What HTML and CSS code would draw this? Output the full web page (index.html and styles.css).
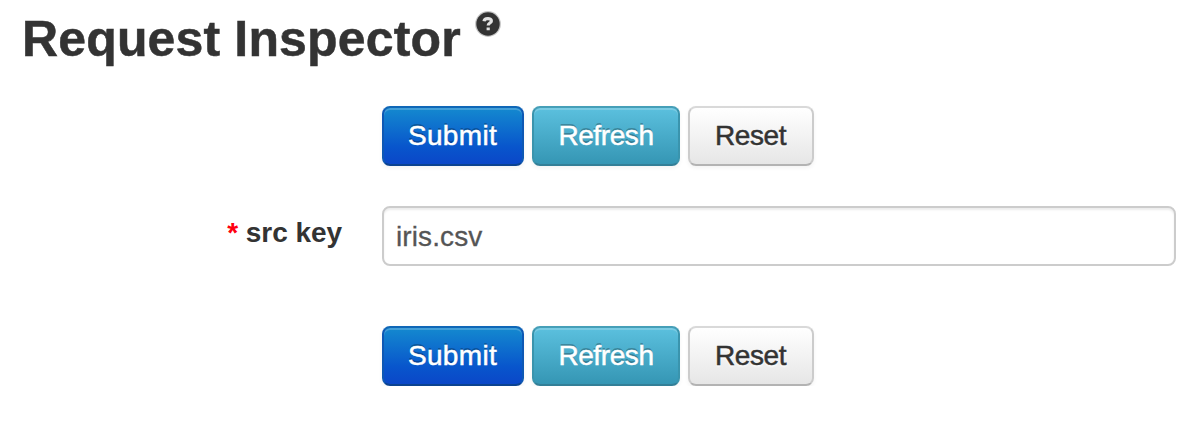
FILE: index.html
```html
<!DOCTYPE html>
<html lang="en">
<head>
<meta charset="utf-8">
<title>Request Inspector</title>
<link rel="stylesheet" href="styles.css">
</head>
<body>
<header class="heading">
  <h1 class="title">Request Inspector</h1>
  <svg class="help" width="28" height="28" viewBox="0 0 28 28"><circle cx="14" cy="14" r="12.900" fill="#c4c4c4"/><circle cx="14" cy="14" r="11.700" fill="#333"/><path d="M10 11.300c.4-3.600 7.400-3.600 7.400-.4 0 2.200-3.200 2.100-3.200 4.500M14.200 17.500v2.800" fill="none" stroke="#e2e2e2" stroke-width="3.200"/></svg>
</header>
<form class="form">
  <div class="actions">
    <button type="button" class="btn submit">Submit</button>
    <button type="button" class="btn refresh">Refresh</button>
    <button type="button" class="btn reset">Reset</button>
  </div>
  <div class="field">
    <label class="label" for="src"><span class="required">*</span> src key</label>
    <input class="input" id="src" value="iris.csv">
  </div>
  <div class="actions">
    <button type="button" class="btn submit">Submit</button>
    <button type="button" class="btn refresh">Refresh</button>
    <button type="button" class="btn reset">Reset</button>
  </div>
</form>
</body>
</html>
```
FILE: styles.css
```css
* { box-sizing: border-box; }
body { margin: 0; background: #fff; color: #333; font-family: "Liberation Sans", Arial, sans-serif; }
.heading { display: flex; height: 106px; padding-left: 22px; }
.title { width: 441px; margin: 0; padding-top: 10px; font-size: 50px; line-height: 58px; letter-spacing: .15px; white-space: nowrap; -webkit-text-stroke: .5px #333; }
.help { margin: 10px 0 0 11px; }
.form { display: flex; flex-direction: column; }
.actions { display: flex; gap: 8px; padding-left: 382px; }
.btn { height: 60px; padding: 0; border: 2px solid; border-radius: 8px; font: 28px "Liberation Sans", Arial, sans-serif; letter-spacing: -.4px; -webkit-text-stroke: .5px currentColor; box-shadow: inset 0 2px 0 rgba(255,255,255,.2), 0 2px 4px rgba(0,0,0,.05); }
.submit { width: 142px; padding-right: 1px; color: #fff; letter-spacing: .35px; background: linear-gradient(#1489cf, #0855cc 70%, #0b47c8); border-color: #0f67b7 #0e58b4 #0b4391; text-shadow: 0 -2px 0 rgba(0,0,0,.25); }
.refresh { width: 148px; color: #fff; background: linear-gradient(#5bc0de, #3596b4); border-color: #469fb8 #3a94ad #337f97; text-shadow: 0 -2px 0 rgba(0,0,0,.25); }
.reset { width: 126px; padding-right: 1px; color: #333; background: linear-gradient(#fff, #e6e6e6); border-color: #d9d9d9 #ccc #b3b3b3; text-shadow: 0 2px 2px rgba(255,255,255,.75); }
.field { display: flex; padding: 40px 26px 60px 0; }
.label { width: 342px; margin-right: 40px; padding-top: 10px; text-align: right; font-size: 28px; font-weight: bold; line-height: 34px; letter-spacing: -.05px; }
.required { color: #ff0010; }
.input { width: 794px; height: 60px; padding: 1px 12px 0; border: 2px solid #ccc; border-radius: 8px; background: #fff; color: #555; font: 28px "Liberation Sans", Arial, sans-serif; letter-spacing: .1px; -webkit-text-stroke: .3px #555; box-shadow: inset 0 2px 2px rgba(0,0,0,.075); }
```
